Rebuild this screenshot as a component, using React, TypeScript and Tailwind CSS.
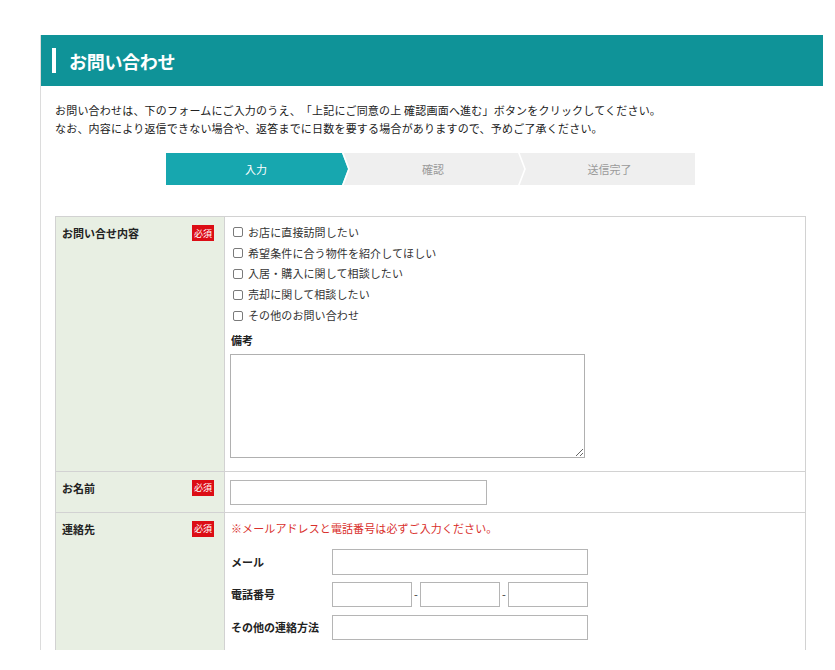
import React from "react";

const TEAL_HEAD = "#0f9398";

function Badge() {
  return (
    <span className="flex h-[16px] w-[22px] items-center justify-center bg-[#dc0d15] text-[9px] leading-none text-white">
      必須
    </span>
  );
}

function Th({ label }: { label: string }) {
  return (
    <div className="w-[169px] shrink-0 border-r border-[#d2d2d2] bg-[#e8efe3] pl-[6px] pr-[10px] pt-[7px]">
      <div className="flex h-[18px] items-center justify-between">
        <span className="text-[11px] font-bold leading-[18px] text-[#222]">{label}</span>
        <Badge />
      </div>
    </div>
  );
}

function Check({ text }: { text: string }) {
  return (
    <div className="flex h-[20.8px] items-center">
      <span className="ml-[3px] mr-[5px] inline-block h-[10px] w-[10px] rounded-[2px] border border-[#7a7a7a] bg-white" />
      <span className="text-[11px] leading-none tracking-[0.1px]">{text}</span>
    </div>
  );
}

export default function App() {
  const items = [
    "お店に直接訪問したい",
    "希望条件に合う物件を紹介してほしい",
    "入居・購入に関して相談したい",
    "売却に関して相談したい",
    "その他のお問い合わせ",
  ];
  return (
    <div className="h-[670px] w-[835px] bg-white pl-[40px] pt-[35px] font-['Meiryo','Noto_Sans_CJK_JP','Noto_Sans',sans-serif] text-[#333] [text-spacing-trim:space-all]">
      <div className="h-[615px] w-[783px] overflow-hidden border-l border-[#dcdcdc]">
        {/* Header */}
        <div className="-ml-px flex h-[51px] items-center bg-[#0f9398] pl-[12px]">
          <div className="h-[25px] w-[4px] bg-white" />
          <h1 className="ml-[13px] text-[18px] font-bold leading-none tracking-[-0.3px] text-white">お問い合わせ</h1>
        </div>

        {/* Intro */}
        <div className="pl-[14px] pt-[15px] text-[11px] leading-[18px] tracking-[0.2px] text-[#222]">
          <p>お問い合わせは、下のフォームにご入力のうえ、「上記にご同意の上 確認画面へ進む」ボタンをクリックしてください。</p>
          <p>なお、内容により返信できない場合や、返答までに日数を要する場合がありますので、予めご了承ください。</p>
        </div>

        {/* Steps */}
        <div className="relative ml-[125px] mt-[16px] flex h-[32px] w-[529px] bg-[#efefef] text-[11px]">
          <div className="flex w-[176px] items-center justify-center bg-[#17a7af] pl-[4px] text-white">入力</div>
          <div className="flex w-[176px] items-center justify-center pl-[6px] text-[#9a9a9a]">確認</div>
          <div className="flex flex-1 items-center justify-center pl-[6px] text-[#9a9a9a]">送信完了</div>
          <svg className="absolute left-[174px] top-0" width="14" height="32" viewBox="0 0 14 32">
            <polygon points="0,0 2,0 8,16 2,32 0,32" fill="#17a7af" />
            <polyline points="2.5,-1 9,16 2.5,33" fill="none" stroke="#ffffff" strokeWidth="1.6" />
          </svg>
          <svg className="absolute left-[350px] top-0" width="14" height="32" viewBox="0 0 14 32">
            <polyline points="2.5,-1 9,16 2.5,33" fill="none" stroke="#ffffff" strokeWidth="1.6" />
          </svg>
        </div>

        {/* Table */}
        <div className="ml-[14px] mt-[31px] w-[751px] border border-[#d2d2d2]">
          {/* Row 1 */}
          <div className="flex">
            <Th label="お問い合せ内容" />
            <div className="flex-1 pb-[13px] pl-[5px] pt-[5px]">
              {items.map((t) => (
                <Check key={t} text={t} />
              ))}
              <div className="ml-[1px] mt-[4px] text-[11px] font-bold leading-[20px] text-[#222]">備考</div>
              <textarea className="mt-[4px] block h-[104px] w-[355px] border border-[#b0b0b0] bg-white" />
            </div>
          </div>

          {/* Row 2 */}
          <div className="flex border-t border-[#d2d2d2]">
            <Th label="お名前" />
            <div className="flex-1 pb-[7px] pl-[5px] pt-[8px]">
              <input className="block h-[25px] w-[257px] border border-[#b5b5b5] bg-white" />
            </div>
          </div>

          {/* Row 3 */}
          <div className="flex h-[200px] border-t border-[#d2d2d2]">
            <Th label="連絡先" />
            <div className="flex-1 pl-[6px] pt-[6px] text-[11px]">
              <p className="leading-[18px] tracking-[0.1px] text-[#d9302c]">※メールアドレスと電話番号は必ずご入力ください。</p>
              <div className="mt-[12px] flex h-[26px] items-center">
                <span className="w-[101px] font-bold text-[#222]">メール</span>
                <input className="h-[26px] w-[256px] border border-[#b5b5b5] bg-white" />
              </div>
              <div className="mt-[7px] flex h-[25px] items-center">
                <span className="w-[101px] font-bold text-[#222]">電話番号</span>
                <input className="h-[25px] w-[80px] border border-[#b5b5b5] bg-white" />
                <span className="w-[8px] text-center leading-none">-</span>
                <input className="h-[25px] w-[80px] border border-[#b5b5b5] bg-white" />
                <span className="w-[8px] text-center leading-none">-</span>
                <input className="h-[25px] w-[80px] border border-[#b5b5b5] bg-white" />
              </div>
              <div className="mt-[8px] flex h-[25px] items-center">
                <span className="w-[101px] font-bold text-[#222]">その他の連絡方法</span>
                <input className="h-[25px] w-[256px] border border-[#b5b5b5] bg-white" />
              </div>
            </div>
          </div>
        </div>
      </div>
    </div>
  );
}
